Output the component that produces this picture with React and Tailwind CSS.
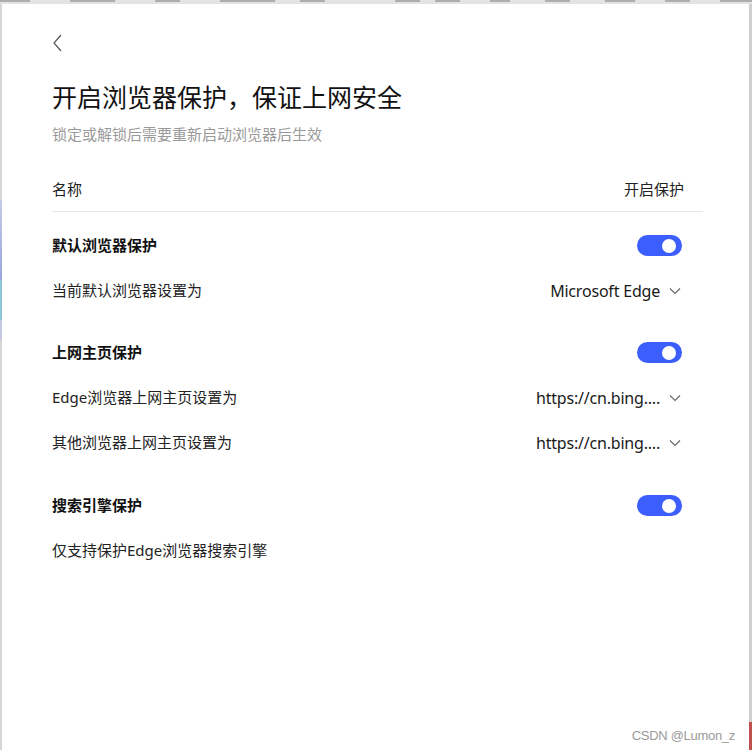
import React from "react";

const font = { fontFamily: '"Noto Sans", "Noto Sans CJK SC", sans-serif' };

function Toggle() {
  return (
    <div className="relative w-[45px] h-[21px] rounded-full bg-[#3b5efc]">
      <div className="absolute right-[6px] top-[3.5px] w-[14px] h-[14px] rounded-full bg-white" />
    </div>
  );
}

function Chevron() {
  return (
    <svg width="12" height="8" viewBox="0 0 12 8" fill="none" className="ml-[9px]">
      <path d="M1 1.5 L6 6.5 L11 1.5" stroke="#666" strokeWidth="1.1" />
    </svg>
  );
}

function SectionRow({ label }) {
  return (
    <div className="h-[45px] flex items-center justify-between pr-[21px]">
      <span className="text-[15px] font-bold text-[#111]">{label}</span>
      <Toggle />
    </div>
  );
}

function SelectRow({ label, value }) {
  return (
    <div className="h-[45px] flex items-center justify-between pr-[22px]">
      <span className="text-[15px] text-[#222]">{label}</span>
      <div className="flex items-center">
        <span className="text-[16px] tracking-[-0.2px] text-[#1a1a1a]">{value}</span>
        <Chevron />
      </div>
    </div>
  );
}

const frags = [
  [0, 30], [70, 45], [155, 25], [220, 55], [300, 25], [395, 25], [435, 25], [490, 20], [545, 25], [605, 30], [665, 25], [720, 32],
];

export default function App() {
  return (
    <div className="relative w-[752px] h-[750px] bg-white overflow-hidden flex flex-col" style={font}>
      <div className="h-[4px] bg-[#e3e3e3] flex">
        {frags.map(([x, w], i) => (
          <div
            key={i}
            className="h-[2px] bg-[#8a8a8a] opacity-60"
            style={{ marginLeft: i === 0 ? x : x - frags[i - 1][0] - frags[i - 1][1], width: w }}
          />
        ))}
      </div>
      <div className="flex-1 flex">
        <div className="w-[2px] flex flex-col">
          <div className="h-[196px] bg-[#d6d6d6]" />
          <div className="h-[80px] bg-gradient-to-b from-[#c5cbe6] to-[#9aa6dc]" />
          <div className="h-[40px] bg-[#8fc4d6]" />
          <div className="h-[20px] bg-[#c3c8e0]" />
          <div className="flex-1 bg-[#d6d6d6]" />
        </div>
        <div className="flex-1 pl-[50px] pr-[46px]">
          <svg width="12" height="18" viewBox="0 0 12 18" fill="none" className="mt-[30px] ml-[0px]">
            <path d="M9 1 L2 9 L9 17" stroke="#555" strokeWidth="1.2" />
          </svg>
          <div className="mt-[28px] text-[25px] leading-[34px] text-[#111]">开启浏览器保护，保证上网安全</div>
          <div className="mt-[10px] text-[15px] leading-[20px] text-[#9a9a9a]">锁定或解锁后需要重新启动浏览器后生效</div>
          <div className="mt-[35px] flex justify-between pr-[19px] pb-[12px] border-b border-[#e8e8e8] text-[15px] leading-[20px] text-[#222]">
            <span>名称</span>
            <span>开启保护</span>
          </div>
          <div className="mt-[11px]">
            <SectionRow label="默认浏览器保护" />
            <SelectRow label="当前默认浏览器设置为" value="Microsoft Edge" />
          </div>
          <div className="mt-[17px]">
            <SectionRow label="上网主页保护" />
            <SelectRow label="Edge浏览器上网主页设置为" value="https://cn.bing...." />
            <SelectRow label="其他浏览器上网主页设置为" value="https://cn.bing...." />
          </div>
          <div className="mt-[18px]">
            <SectionRow label="搜索引擎保护" />
            <div className="h-[45px] flex items-center">
              <span className="text-[15px] text-[#222]">仅支持保护Edge浏览器搜索引擎</span>
            </div>
          </div>
        </div>
        <div className="w-[3px] flex flex-col">
          <div className="flex-1 bg-[#cfcfcf]" />
          <div className="h-[28px] bg-[#c0504d]" />
        </div>
      </div>
      <div
        className="absolute right-[17px] bottom-[5px] text-[13px] tracking-[-0.3px] text-[#9a9a9a]"
        style={{ fontFamily: '"Liberation Sans", Arial, sans-serif' }}
      >
        CSDN @Lumon_z
      </div>
    </div>
  );
}
